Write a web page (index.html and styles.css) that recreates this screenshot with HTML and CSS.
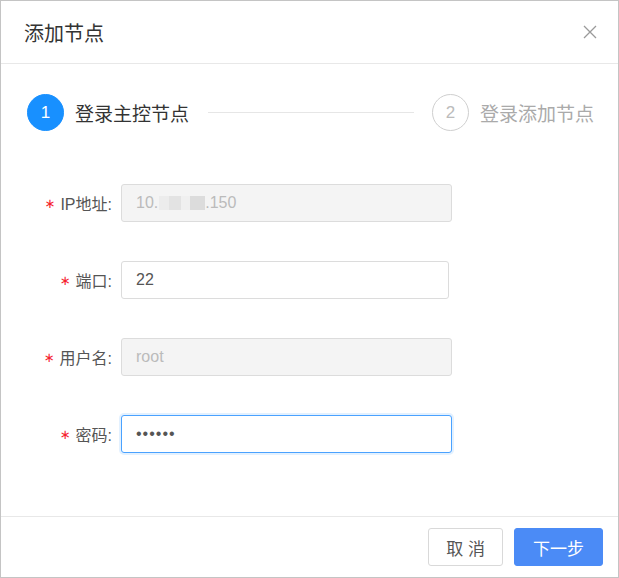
FILE: index.html
```html
<!DOCTYPE html>
<html lang="zh-CN">
<head>
<meta charset="UTF-8">
<meta name="viewport" content="width=device-width, initial-scale=1.0">
<title>添加节点</title>
<link rel="stylesheet" href="styles.css">
</head>
<body>
<div class="dialog">
    <div class="dialog-header">
        <span class="dialog-title">添加节点</span>
        <button class="dialog-close" type="button" aria-label="关闭">
            <svg width="14" height="14" viewBox="0 0 14 14"><path d="M1 1L13 13M13 1L1 13" stroke="#9a9a9a" stroke-width="1.3" fill="none"/></svg>
        </button>
    </div>
    <div class="dialog-body">
        <div class="steps">
            <div class="step is-active">
                <span class="step-icon">1</span>
                <span class="step-title">登录主控节点</span>
            </div>
            <div class="step-line"></div>
            <div class="step">
                <span class="step-icon">2</span>
                <span class="step-title">登录添加节点</span>
            </div>
        </div>
        <form class="form">
            <div class="form-item">
                <label class="form-label"><span class="required">∗</span>IP地址:</label>
                <div class="input is-disabled">10.<span class="mosaic"></span>.150</div>
            </div>
            <div class="form-item">
                <label class="form-label"><span class="required">∗</span>端口:</label>
                <input class="input input-short" type="text" value="22">
            </div>
            <div class="form-item">
                <label class="form-label"><span class="required">∗</span>用户名:</label>
                <input class="input" type="text" value="root" disabled>
            </div>
            <div class="form-item">
                <label class="form-label"><span class="required">∗</span>密码:</label>
                <input class="input is-focus" type="password" value="123456">
            </div>
        </form>
    </div>
    <div class="dialog-footer">
        <button class="btn" type="button">取 消</button>
        <button class="btn btn-primary" type="button">下一步</button>
    </div>
</div>
</body>
</html>
```

FILE: styles.css
```css
body {
    margin: 0;
    font-family: "Liberation Sans", "Noto Sans CJK SC", sans-serif;
    background-color: #fff;
}

.dialog {
    width: 619px;
    height: 578px;
    box-sizing: border-box;
    border: 1px solid #c4c4c4;
    display: flex;
    flex-direction: column;
    background-color: #fff;
}

.dialog-header {
    height: 62px;
    border-bottom: 1px solid #e8e8e8;
    display: flex;
    align-items: center;
    justify-content: space-between;
    padding: 0 21px 0 23px;
}

.dialog-title {
    font-size: 20px;
    color: #333;
}

.dialog-close {
    border: none;
    background: none;
    padding: 0;
    width: 14px;
    height: 14px;
    display: flex;
    cursor: pointer;
}

.dialog-body {
    flex: 1;
}

.steps {
    display: flex;
    align-items: center;
    padding: 30px 24px 0 26px;
}

.step {
    display: flex;
    align-items: center;
}

.step-icon {
    width: 37px;
    height: 37px;
    box-sizing: border-box;
    border-radius: 50%;
    border: 1px solid #cfcfcf;
    color: #bbb;
    font-size: 17px;
    display: flex;
    align-items: center;
    justify-content: center;
    margin-right: 11px;
}

.step-title {
    font-size: 19px;
    color: #aaa;
}

.step.is-active .step-icon {
    background-color: #1890ff;
    border-color: #1890ff;
    color: #fff;
}

.step.is-active .step-title {
    color: #333;
}

.step-line {
    flex: 1;
    height: 1px;
    background-color: #e6e6e6;
    margin: 0 18px 0 19px;
}

.form {
    margin: 0;
    padding-top: 53px;
    display: flex;
    flex-direction: column;
    gap: 39px;
}

.form-item {
    display: flex;
    align-items: center;
}

.form-label {
    width: 120px;
    box-sizing: border-box;
    padding-right: 9px;
    text-align: right;
    font-size: 16px;
    color: #555;
}

.required {
    font-family: "DejaVu Sans", sans-serif;
    font-size: 13px;
    color: #f5222d;
    margin-right: 5px;
    vertical-align: 2px;
}

.input {
    width: 331px;
    height: 38px;
    box-sizing: border-box;
    margin: 0;
    border: 1px solid #dcdcdc;
    border-radius: 3px;
    padding: 0 14px;
    font-family: inherit;
    font-size: 16px;
    color: #555;
    background-color: #fff;
    display: flex;
    align-items: center;
    outline: none;
}

.input-short {
    width: 328px;
}

.input.is-disabled,
.input:disabled {
    background-color: #f4f4f4;
    color: #bbb;
}

.input.is-focus {
    border-color: #4aa2ff;
    box-shadow: 0 0 0 2px rgba(64, 158, 255, 0.15);
    letter-spacing: 1px;
}

.mosaic {
    display: inline-block;
    width: 46px;
    height: 14px;
    margin-left: 1px;
    background: linear-gradient(90deg, #ececec 0 10px, #e3e3e3 10px 22px, #f0f0f0 22px 31px, #dcdcdc 31px 46px);
}

.dialog-footer {
    height: 60px;
    border-top: 1px solid #e8e8e8;
    display: flex;
    align-items: center;
    justify-content: flex-end;
    gap: 11px;
    padding: 0 15px;
}

.btn {
    height: 38px;
    padding: 0 17px;
    border: 1px solid #d9d9d9;
    border-radius: 3px;
    background-color: #fff;
    color: #555;
    font-family: inherit;
    font-size: 17px;
    cursor: pointer;
}

.btn-primary {
    padding: 0 18px;
    background-color: #4b8bf6;
    border-color: #4b8bf6;
    color: #fff;
}
```
